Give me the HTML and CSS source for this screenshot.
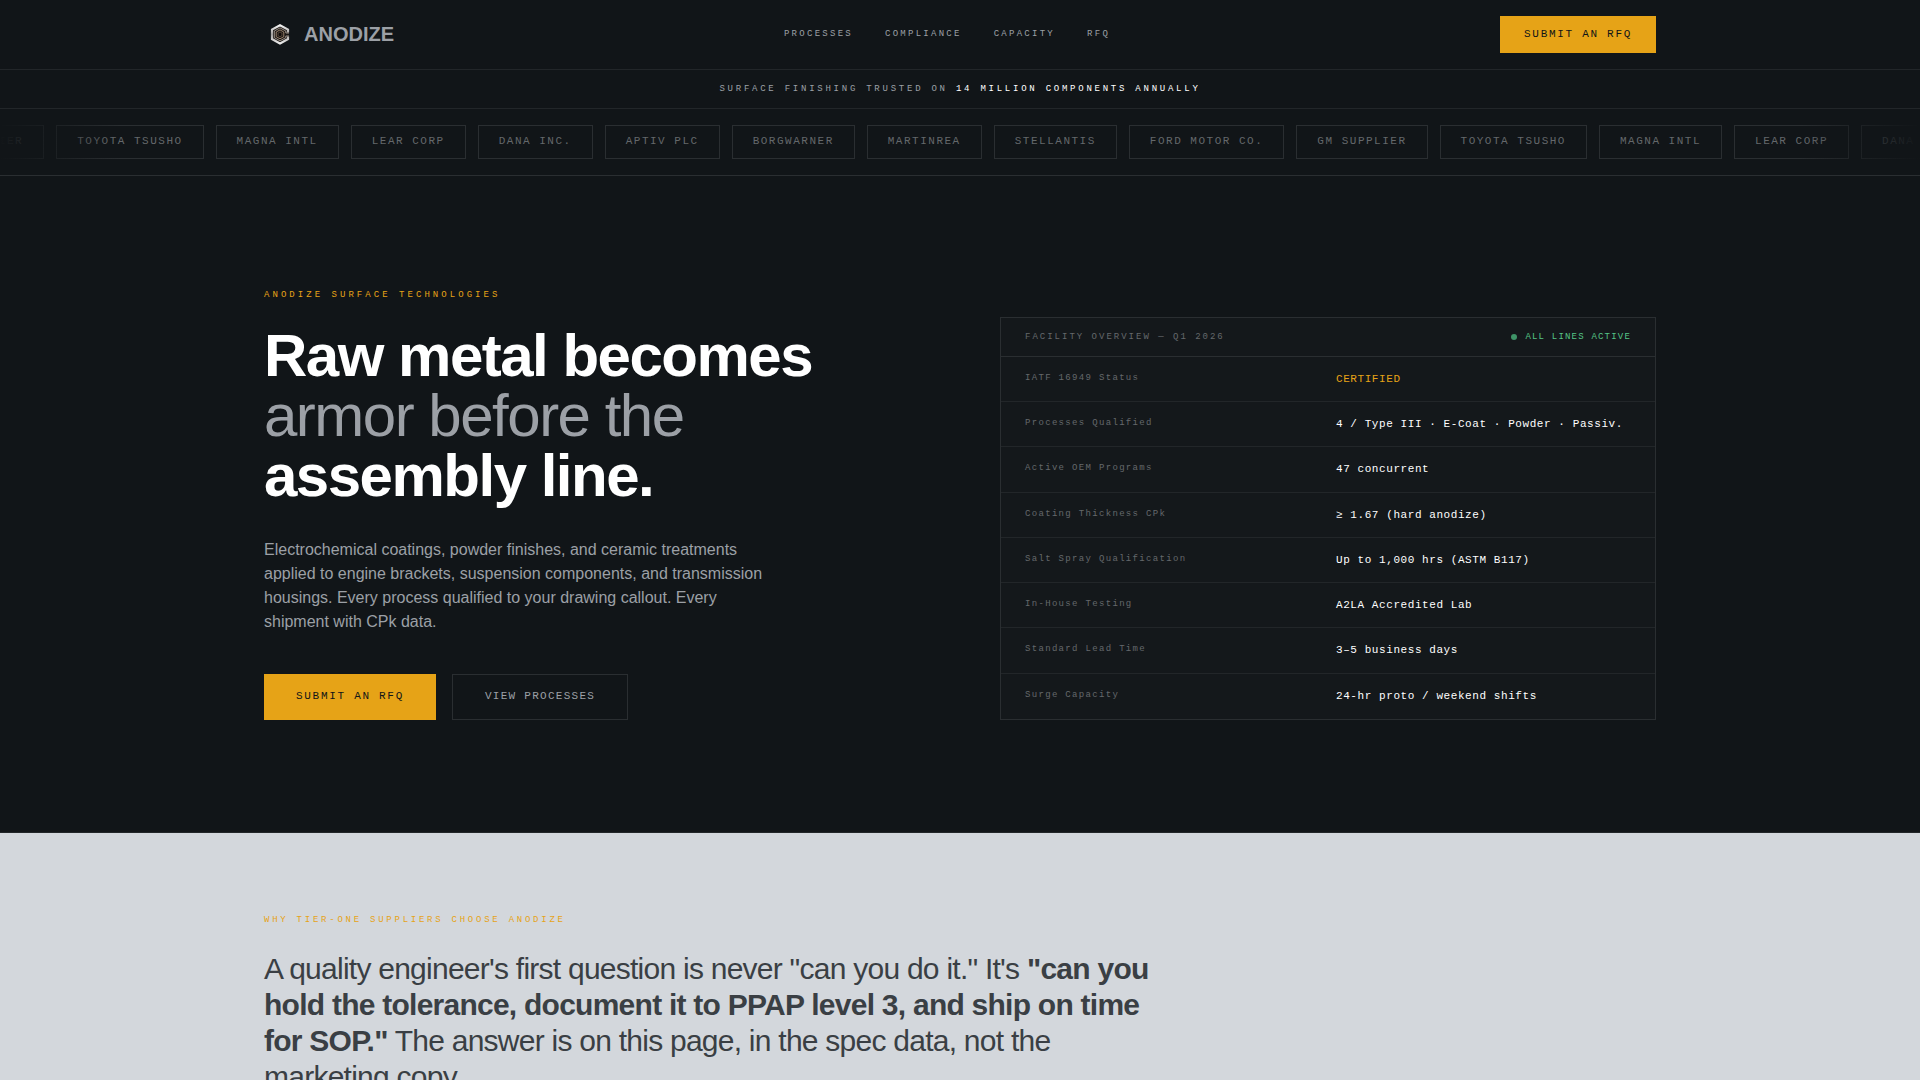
FILE: index.html
```html
<!DOCTYPE html>
<html lang="en">
<head>
  <meta charset="utf-8">
  <meta name="viewport" content="width=device-width, initial-scale=1">
  <title>Anodize Surface Technologies</title>
  <link rel="stylesheet" href="styles.css">
</head>
<body>
  <header class="site-header">
    <div class="container site-header-inner">
      <a class="brand" href="#">
        <svg class="brand-mark" viewBox="0 0 32 32" aria-hidden="true">
          <defs>
            <linearGradient id="steel" x1="0" y1="0" x2="0" y2="1">
              <stop offset="0" stop-color="#f4f4f4"/>
              <stop offset=".5" stop-color="#a19e9c"/>
              <stop offset="1" stop-color="#ececec"/>
            </linearGradient>
          </defs>
          <path d="M16 5L25 10V20.500L16 25.500L7 20.500V10Z" fill="#1a1614"/>
          <path d="M24 13.500V10.600L16 6.200L8 10.600V20L16 24.400L24 20V17.500" fill="none" stroke="url(#steel)" stroke-width="2.200"/>
          <path d="M25 14H21.800V12L16 8.900L10.300 12V18.700L16 21.800L21.800 18.700V17H25" fill="none" stroke="#b8aca1" stroke-width=".8"/>
          <path d="M16 10.900L19.800 13V17.700L16 19.800L12.200 17.700V13Z" fill="none" stroke="#b89c80" stroke-width=".8"/>
          <path d="M16 13L17.900 14V16.700L16 17.700L14.100 16.700V14Z" fill="#0d0a08" stroke="#7c6450" stroke-width=".6"/>
        </svg>
        <span>ANODIZE</span>
      </a>
      <nav class="site-nav" aria-label="Main">
        <a href="#processes">PROCESSES</a>
        <a href="#compliance">COMPLIANCE</a>
        <a href="#capacity">CAPACITY</a>
        <a href="#rfq">RFQ</a>
      </nav>
      <button class="button button-primary button-small" type="button">SUBMIT AN RFQ</button>
    </div>
  </header>

  <p class="trust-line">SURFACE FINISHING TRUSTED ON <span class="trust-figure">14 MILLION COMPONENTS ANNUALLY</span></p>

  <div class="ticker">
    <ul class="ticker-track">
      <li>GM SUPPLIER</li>
      <li>TOYOTA TSUSHO</li>
      <li>MAGNA INTL</li>
      <li>LEAR CORP</li>
      <li>DANA INC.</li>
      <li>APTIV PLC</li>
      <li>BORGWARNER</li>
      <li>MARTINREA</li>
      <li>STELLANTIS</li>
      <li>FORD MOTOR CO.</li>
      <li>GM SUPPLIER</li>
      <li>TOYOTA TSUSHO</li>
      <li>MAGNA INTL</li>
      <li>LEAR CORP</li>
      <li>DANA INC.</li>
    </ul>
  </div>

  <main>
    <section class="hero">
      <div class="container hero-grid">
        <div>
          <p class="eyebrow eyebrow-wide">ANODIZE SURFACE TECHNOLOGIES</p>
          <h1 class="hero-title">Raw metal becomes <span class="hero-title-light">armor before the</span> assembly line.</h1>
          <p class="hero-text">Electrochemical coatings, powder finishes, and ceramic treatments applied to engine brackets, suspension components, and transmission housings. Every process qualified to your drawing callout. Every shipment with CPk data.</p>
          <div class="hero-actions">
            <button class="button button-primary" type="button">SUBMIT AN RFQ</button>
            <button class="button button-outline" type="button">VIEW PROCESSES</button>
          </div>
        </div>

        <div class="panel">
          <div class="panel-head">
            <h2 class="panel-title">FACILITY OVERVIEW — Q1 2026</h2>
            <span class="panel-status">ALL LINES ACTIVE</span>
          </div>
          <table class="spec-table">
            <tbody>
              <tr><th scope="row">IATF 16949 Status</th><td class="spec-certified">CERTIFIED</td></tr>
              <tr><th scope="row">Processes Qualified</th><td>4 / Type III · E-Coat · Powder · Passiv.</td></tr>
              <tr><th scope="row">Active OEM Programs</th><td>47 concurrent</td></tr>
              <tr><th scope="row">Coating Thickness CPk</th><td>≥ 1.67 (hard anodize)</td></tr>
              <tr><th scope="row">Salt Spray Qualification</th><td>Up to 1,000 hrs (ASTM B117)</td></tr>
              <tr><th scope="row">In-House Testing</th><td>A2LA Accredited Lab</td></tr>
              <tr><th scope="row">Standard Lead Time</th><td>3–5 business days</td></tr>
              <tr><th scope="row">Surge Capacity</th><td>24-hr proto / weekend shifts</td></tr>
            </tbody>
          </table>
        </div>
      </div>
    </section>

    <section class="why">
      <div class="container">
        <p class="eyebrow">WHY TIER-ONE SUPPLIERS CHOOSE ANODIZE</p>
        <p class="why-quote">A quality engineer's first question is never "can you do it." It's <strong>"can you hold the tolerance, document it to PPAP level 3, and ship on time for SOP."</strong> The answer is on this page, in the spec data, not the marketing copy.</p>
      </div>
    </section>
  </main>
</body>
</html>
```
FILE: styles.css
```css
:root {
  --ink: #111518;
  --panel: #14181b;
  --line: #222629;
  --line-strong: #2a2e31;
  --muted: #9ca0a6;
  --dim: #64686b;
  --amber: #e6a317;
  --green: #55c486;
  --fog: #d3d7dc;
  --sans: "Liberation Sans", Arial, sans-serif;
  --mono: "Liberation Mono", "Courier New", monospace;
}

* {
  box-sizing: border-box;
}

body,
h1,
h2,
p,
ul {
  margin: 0;
  padding: 0;
}

body {
  background: var(--ink);
  color: #fff;
  font-family: var(--sans);
  font-size: 16px;
  line-height: 24px;
  overflow-x: hidden;
}

a {
  color: inherit;
  text-decoration: none;
}

.container {
  max-width: 1440px;
  margin: 0 auto;
  padding: 0 24px;
}

/* Header */
.site-header {
  border-bottom: 1px solid var(--line);
  padding: 16px 0;
}

.site-header-inner {
  display: flex;
  align-items: center;
  justify-content: space-between;
}

.brand {
  display: flex;
  align-items: center;
  gap: 8px;
  color: var(--muted);
  font-size: 20px;
  font-weight: 700;
  line-height: 23px;
}

.brand-mark {
  width: 32px;
  height: 32px;
}

.site-nav {
  display: flex;
  gap: 32px;
  color: var(--muted);
  font-family: var(--mono);
  font-size: 9px;
  line-height: 17px;
  letter-spacing: 0.252em;
}

/* Buttons */
.button {
  border: 0;
  padding: 15px 32px 17px;
  font-family: var(--mono);
  font-size: 11px;
  line-height: 14px;
  white-space: nowrap;
  cursor: pointer;
}

.button-primary {
  background: var(--amber);
  color: var(--ink);
  letter-spacing: 0.155em;
}

.button-small {
  padding: 12px 24px;
  line-height: 13px;
}

.button-outline {
  background: none;
  border: 1px solid var(--line-strong);
  padding: 14px 32px 16px;
  color: var(--muted);
  letter-spacing: 0.115em;
}

/* Trust line and ticker */
.trust-line {
  border-bottom: 1px solid var(--line);
  padding: 12px 24px;
  color: var(--muted);
  font-family: var(--mono);
  font-size: 9px;
  line-height: 14px;
  letter-spacing: 0.306em;
  text-align: center;
}

.trust-figure {
  color: #fff;
}

.ticker {
  position: relative;
  border-bottom: 1px solid var(--line-strong);
  padding: 16px 0;
  overflow: hidden;
}

.ticker-track {
  display: flex;
  gap: 12px;
  margin-left: -87px;
  list-style: none;
}

.ticker::before,
.ticker::after {
  content: "";
  position: absolute;
  top: 0;
  bottom: 0;
  width: 120px;
}

.ticker::before {
  left: 0;
  background: linear-gradient(to right, var(--ink), transparent);
}

.ticker::after {
  right: 0;
  background: linear-gradient(to left, var(--ink), transparent);
}

.ticker-track li {
  flex: none;
  border: 1px solid var(--line-strong);
  padding: 8px 20px 10px;
  color: var(--dim);
  font-family: var(--mono);
  font-size: 11px;
  line-height: 14px;
  letter-spacing: 0.137em;
}

/* Hero */
.hero {
  border-bottom: 1px solid var(--line);
  padding: 112px 0;
}

.hero-grid {
  display: grid;
  grid-template-columns: 1fr 1fr;
  gap: 80px;
  align-items: end;
}

.eyebrow {
  margin-bottom: 24px;
  color: var(--amber);
  font-family: var(--mono);
  font-size: 9px;
  line-height: 14px;
  letter-spacing: 0.306em;
}

.eyebrow-wide {
  letter-spacing: 0.338em;
}

.hero-title {
  margin-bottom: 32px;
  font-size: 60px;
  line-height: 60px;
  letter-spacing: -0.025em;
}

.hero-title-light {
  display: block;
  color: var(--muted);
  font-weight: 400;
}

.hero-text {
  max-width: 520px;
  margin-bottom: 40px;
  color: var(--muted);
}

.hero-actions {
  display: flex;
  gap: 16px;
}

/* Facility panel */
.panel {
  border: 1px solid var(--line-strong);
  padding-bottom: 1px;
  background: var(--panel);
  font-family: var(--mono);
}

.panel-head {
  display: flex;
  align-items: center;
  justify-content: space-between;
  border-bottom: 1px solid var(--line-strong);
  padding: 12px 24px;
  line-height: 14px;
}

.panel-title {
  color: var(--dim);
  font-size: 9px;
  font-weight: 400;
  letter-spacing: 0.222em;
}

.panel-status {
  display: flex;
  align-items: center;
  gap: 8px;
  color: var(--green);
  font-size: 9px;
  letter-spacing: 0.133em;
}

.panel-status::before {
  content: "";
  width: 6px;
  height: 6px;
  border-radius: 50%;
  background: #3f9468;
}

.spec-table {
  width: 100%;
  border-collapse: collapse;
  table-layout: fixed;
  text-align: left;
}

.spec-table tr + tr {
  border-top: 1px solid var(--line);
}

.spec-table th,
.spec-table td {
  vertical-align: top;
}

.spec-table th {
  padding: 14px 8px 14px 24px;
  color: var(--dim);
  font-size: 9px;
  font-weight: 400;
  line-height: 14px;
  letter-spacing: 0.147em;
}

.spec-table td {
  padding: 14px 24px 14px 8px;
  font-size: 11px;
  line-height: 1.48;
  letter-spacing: 0.052em;
}

.spec-table .spec-certified {
  color: var(--amber);
}

/* Why section */
.why {
  background: var(--fog);
  padding: 80px 0;
}

.why-quote {
  max-width: 900px;
  color: #3a3f44;
  font-size: 30px;
  line-height: 36px;
  letter-spacing: -0.025em;
}
```
